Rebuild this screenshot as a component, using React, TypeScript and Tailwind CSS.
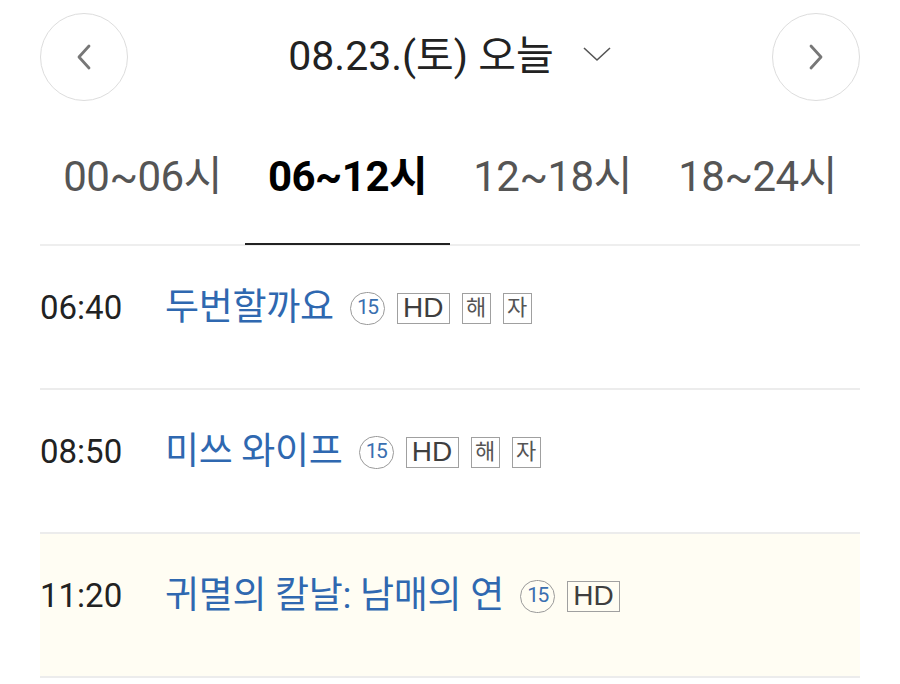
import React from 'react';

const font = { fontFamily: 'Roboto, "Noto Sans CJK KR", sans-serif' };

const programs = [
  { time: '06:40', title: '두번할까요', tags: ['해', '자'], now: false },
  { time: '08:50', title: '미쓰 와이프', tags: ['해', '자'], now: false },
  { time: '11:20', title: '귀멸의 칼날: 남매의 연', tags: [], now: true },
];

const tabs = ['00~06시', '06~12시', '12~18시', '18~24시'];

function Chevron({ dir }: { dir: 'left' | 'right' }) {
  return (
    <svg width="16" height="28" viewBox="0 0 16 28" fill="none">
      <path
        d={dir === 'left' ? 'M13 3 L3 14 L13 25' : 'M3 3 L13 14 L3 25'}
        stroke="#777"
        strokeWidth="2.8"
        strokeLinecap="round"
        strokeLinejoin="round"
      />
    </svg>
  );
}

function Badges({ tags }: { tags: string[] }) {
  return (
    <div className="flex items-center gap-3">
      <span className="flex h-[33px] w-[35px] items-center justify-center rounded-full border-[1.5px] border-[#9a9a9a] text-[21px] text-[#3a6fb0] tracking-[-1.5px]">
        15
      </span>
      <span
        className="flex h-[31px] w-[53px] items-center justify-center border-[1.5px] border-[#a0a0a0] text-[28px] text-[#3f3f3f] leading-none"
        style={{ fontFamily: '"Liberation Sans", Arial, sans-serif' }}
      >
        HD
      </span>
      {tags.map((t) => (
        <span
          key={t}
          className="flex h-[31px] w-[29px] items-center justify-center border-[1.5px] border-[#a0a0a0] text-[22px] text-[#555] leading-none"
        >
          {t}
        </span>
      ))}
    </div>
  );
}

export default function App() {
  return (
    <div className="min-h-[684px] bg-white px-10 pt-[13px]" style={font}>
      <div className="flex h-[88px] items-center justify-between">
        <button className="flex h-[88px] w-[88px] items-center justify-center rounded-full border border-[#dddddd]">
          <Chevron dir="left" />
        </button>
        <div className="flex items-center gap-[28px] text-[41px] text-[#222]">
          <span>08.23.(토) 오늘</span>
          <svg width="30" height="16" viewBox="0 0 30 16" fill="none" className="mt-[-6px]">
            <path d="M2 2 L15 14 L28 2" stroke="#555" strokeWidth="1.6" strokeLinejoin="round" />
          </svg>
        </div>
        <button className="flex h-[88px] w-[88px] items-center justify-center rounded-full border border-[#dddddd]">
          <Chevron dir="right" />
        </button>
      </div>

      <div className="grid grid-cols-4 border-b-2 border-[#eeeeee]">
        {tabs.map((t, i) => (
          <div
            key={t}
            className={
              i === 1
                ? 'relative flex h-[143px] items-center justify-center pt-2 text-[42px] font-bold text-black tracking-[-0.5px]'
                : 'relative flex h-[143px] items-center justify-center pt-2 text-[42px] text-[#555] tracking-[-0.5px]'
            }
          >
            {t}
            {i === 1 && <div className="absolute bottom-[-1px] left-0 right-0 h-[2px] bg-[#222]" />}
          </div>
        ))}
      </div>

      {programs.map((p) => (
        <div
          key={p.time}
          className={
            p.now
              ? 'flex h-[144px] items-center border-b-2 border-[#ececec] bg-[#fffdf3] pb-[18px]'
              : 'flex h-[144px] items-center border-b-2 border-[#ececec] pb-[18px]'
          }
        >
          <span className="w-[125px] text-[33px] text-[#222]">{p.time}</span>
          <span className="mr-[16px] text-[37px] text-[#2f68b0] tracking-[-0.3px]">{p.title}</span>
          <Badges tags={p.tags} />
        </div>
      ))}
    </div>
  );
}
